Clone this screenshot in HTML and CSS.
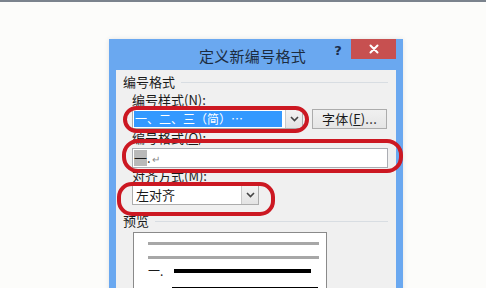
FILE: index.html
```html
<!DOCTYPE html>
<html lang="zh-CN">
<head>
<meta charset="utf-8">
<link rel="stylesheet" href="styles.css">
</head>
<body>
<div class="topline"></div>
<div class="dialog">
  <div class="titlebar">
    <div></div>
    <div class="title">定义新编号格式</div>
    <div class="tb-buttons">
      <div class="help">?</div>
      <div class="close">
        <svg width="10" height="10" viewBox="0 0 10 10"><path d="M1.5 1.5 L8.5 8.5 M8.5 1.5 L1.5 8.5" stroke="#fff" stroke-width="2" stroke-linecap="round"/></svg>
      </div>
    </div>
  </div>
  <div class="client">
    <div class="group-title">编号格式</div>
    <div class="field-label l1">编号样式(<u>N</u>):</div>
    <div class="row1">
      <div class="combo c1">
        <div class="combo-text selected">一、二、三（简）…</div>
        <div class="combo-arrow">
          <svg width="9" height="6" viewBox="0 0 9 6"><path d="M1 1 L4.5 4.5 L8 1" fill="none" stroke="#444" stroke-width="1.6"/></svg>
        </div>
      </div>
      <div class="btn">字体(<u>F</u>)...</div>
    </div>
    <div class="field-label l2">编号格式(<u>O</u>):</div>
    <div class="textbox"><span class="hl">一</span>.<span class="para">↵</span></div>
    <div class="field-label l3">对齐方式(<u>M</u>):</div>
    <div class="combo c3">
      <div class="combo-text">左对齐</div>
      <div class="combo-arrow">
        <svg width="9" height="6" viewBox="0 0 9 6"><path d="M1 1 L4.5 4.5 L8 1" fill="none" stroke="#444" stroke-width="1.6"/></svg>
      </div>
    </div>
    <div class="group-title g2">预览</div>
    <div class="preview">
      <div class="pline gray"></div>
      <div class="pline gray g2l"></div>
      <div class="prow">
        <span class="num">一.</span>
        <div class="bar"></div>
      </div>
      <div class="bar bar2"></div>
    </div>
  </div>
</div>
<div class="mark m1"></div>
<div class="mark m2"></div>
<div class="mark m3"></div>
</body>
</html>
```
FILE: styles.css
```css
html, body {
  margin: 0;
  padding: 0;
  background: #fcfcfa;
  overflow: hidden;
  height: 288px;
  font-family: "Noto Sans CJK SC", "Noto Sans", sans-serif;
  font-size: 13px;
  color: #1a1a1a;
}
u { text-decoration: underline; }
.topline {
  height: 2px;
  background: #7b838d;
}
.dialog {
  margin: 37px 0 0 109px;
  width: 294px;
  height: 260px;
  background: #6aa8f0;
  box-shadow: 0 0 5px rgba(0,0,0,0.10);
  display: flex;
  flex-direction: column;
}
.titlebar {
  height: 31px;
  display: grid;
  grid-template-columns: 1fr auto 1fr;
  padding-right: 7px;
}
.title {
  font-size: 15px;
  line-height: 29px;
  padding-top: 2px;
  color: #1c2c40;
  letter-spacing: 0.3px;
}
.tb-buttons {
  display: flex;
  justify-content: flex-end;
  align-items: flex-start;
}
.help {
  width: 26px;
  height: 20px;
  line-height: 20px;
  text-align: center;
  font-family: "DejaVu Sans", sans-serif;
  font-weight: bold;
  font-size: 13px;
  color: #1b2d4a;
  margin-top: 2px;
}
.close {
  width: 45px;
  height: 20px;
  background: #c75050;
  display: flex;
  align-items: center;
  justify-content: center;
}
.client {
  flex: 1;
  margin: 0 7px;
  background: #f0f0f0;
  padding: 4px 8px 0 7px;
  display: flex;
  flex-direction: column;
  align-items: flex-start;
  overflow: hidden;
}
.group-title {
  height: 16px;
  line-height: 16px;
  align-self: stretch;
  display: flex;
  align-items: center;
  gap: 6px;
}
.group-title::after {
  content: "";
  flex: 1;
  height: 1px;
  background: #d8dde2;
}
.group-title.g2 { margin-top: 8px; }
.field-label {
  height: 16px;
  line-height: 16px;
  padding-left: 9px;
}
.l1 { margin-top: 2px; }
.l2 { margin-top: 1px; }
.row1 {
  margin-top: 1px;
  margin-left: 9px;
  display: flex;
  gap: 9px;
}
.combo {
  display: flex;
  border: 1px solid #acacac;
  background: #fff;
  box-sizing: border-box;
}
.c1 { width: 171px; height: 20px; }
.c3 { width: 127px; height: 21px; margin-top: 1px; margin-left: 9px; }
.combo-text {
  flex: 1;
  line-height: 18px;
  padding-left: 3px;
  white-space: nowrap;
  overflow: hidden;
  font-size: 13px;
}
.combo-text.selected {
  background: #3399ff;
  color: #fff;
  margin: 1px 3px 1px 1px;
  line-height: 16px;
  font-size: 12px;
  padding-left: 1px;
}
.combo-arrow {
  width: 16px;
  border-left: 1px solid #c9c9c9;
  background: linear-gradient(#f3f3f3, #e3e3e3);
  display: flex;
  align-items: center;
  justify-content: center;
}
.btn {
  width: 75px;
  height: 20px;
  box-sizing: border-box;
  border: 1px solid #acacac;
  background: linear-gradient(#f0f0f0, #e5e5e5);
  line-height: 18px;
  text-align: center;
  font-size: 13px;
  letter-spacing: 0.3px;
}
.textbox {
  margin-top: 2px;
  margin-left: 9px;
  width: 256px;
  height: 20px;
  box-sizing: border-box;
  border: 1px solid #abadb3;
  background: #fff;
  line-height: 18px;
  padding-left: 1px;
  font-size: 13px;
}
.hl {
  background: #b9b9b9;
  display: inline-block;
  line-height: 16px;
}
.para { color: #888; font-size: 10px; margin-left: 1px; }
.preview {
  margin-top: 3px;
  margin-left: 10px;
  width: 194px;
  height: 80px;
  box-sizing: border-box;
  border: 1px solid #8a8a8a;
  background: #fff;
  padding-left: 14px;
  flex-shrink: 0;
}
.pline {
  height: 3px;
  width: 171px;
  background: #a7a7a7;
  margin-top: 9px;
}
.pline.g2l { margin-top: 11px; }
.prow {
  margin-top: 6px;
  display: flex;
  align-items: center;
  height: 12px;
}
.num {
  font-size: 12px;
  line-height: 12px;
  width: 26px;
}
.bar {
  height: 4px;
  width: 137px;
  background: #000;
}
.bar2 {
  width: 146px;
  margin-top: 10px;
  margin-left: 24px;
}
.mark {
  position: absolute;
  border: 4px solid #cc1822;
  box-sizing: border-box;
}
.m1 { left: 123px; top: 106px; width: 186px; height: 27px; border-radius: 14px; }
.m2 { left: 122px; top: 139px; width: 281px; height: 34px; border-radius: 16px; }
.m3 { left: 117px; top: 182px; width: 158px; height: 34px; border-radius: 15px; }
```
